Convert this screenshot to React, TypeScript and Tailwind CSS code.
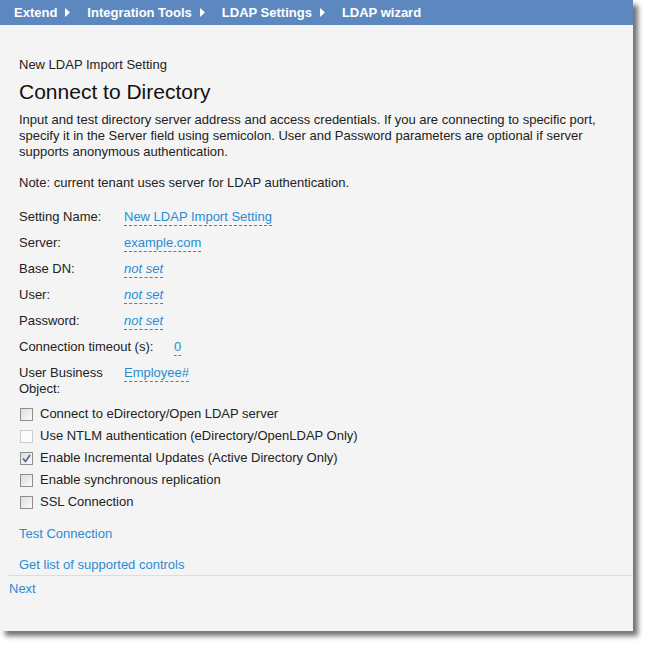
import React from "react";

const Tri = () => (
  <svg width="5" height="9" viewBox="0 0 5 9" className="ml-[8px] mr-[17px] inline-block">
    <path d="M0 0 L5 4.5 L0 9 Z" fill="#ffffff" />
  </svg>
);

const Box = ({ checked = false, disabled = false }: { checked?: boolean; disabled?: boolean }) => (
  <span
    className={
      "inline-flex h-[13px] w-[13px] items-center justify-center border " +
      (disabled ? "border-[#cdcdcd] bg-[#fbfbfb]" : "border-[#8e8e8e] bg-gradient-to-br from-[#dcdcdc] to-[#fbfbfb]")
    }
  >
    {checked && (
      <svg width="9" height="9" viewBox="0 0 9 9">
        <path d="M1 4.5 L3.5 7.5 L8 1" stroke="#4a5fa8" strokeWidth="1.6" fill="none" />
      </svg>
    )}
  </span>
);

const Row = ({ label, value, italic = false, wide = false }: { label: React.ReactNode; value: string; italic?: boolean; wide?: boolean }) => (
  <div className="flex h-[26px] items-start">
    <div className={wide ? "w-[155px]" : "w-[105px]"}>{label}</div>
    <span className={"border-b border-dashed border-[#2b8bd2] leading-[16px] text-[#2b8bd2] " + (italic ? "italic" : "")}>{value}</span>
  </div>
);

export default function App() {
  return (
    <div className="min-h-[646px] w-[648px] bg-white" style={{ fontFamily: '"Liberation Sans", Arial, sans-serif' }}>
      <div className="relative h-[631px] w-[633px] bg-[#f4f4f4] text-[13px] leading-[16px] text-[#222] shadow-[5px_5px_5px_rgba(0,0,0,0.55)]">
        <div className="flex h-[25px] items-center bg-[#5d88bf] pl-[14px] text-[13px] font-bold text-white">
          <span>Extend</span>
          <Tri />
          <span>Integration Tools</span>
          <Tri />
          <span>LDAP Settings</span>
          <Tri />
          <span>LDAP wizard</span>
        </div>
        <div className="pl-[19px] pr-[20px]">
          <div className="mt-[32px]">New LDAP Import Setting</div>
          <div className="mt-[7px] text-[21px] leading-[24px] text-[#111]">Connect to Directory</div>
          <div className="mt-[8px] pr-[8px]">
            Input and test directory server address and access credentials. If you are connecting to specific port, specify it in the Server field using semicolon. User and Password parameters are optional if server supports anonymous authentication.
          </div>
          <div className="mt-[15px]">Note: current tenant uses server for LDAP authentication.</div>
          <div className="mt-[18px]">
            <Row label="Setting Name:" value="New LDAP Import Setting" />
            <Row label="Server:" value="example.com" />
            <Row label="Base DN:" value="not set" italic />
            <Row label="User:" value="not set" italic />
            <Row label="Password:" value="not set" italic />
            <Row label="Connection timeout (s):" value="0" wide />
            <div className="flex items-start">
              <div className="w-[105px]">User Business<br />Object:</div>
              <span className="border-b border-dashed border-[#2b8bd2] leading-[16px] text-[#2b8bd2]">Employee#</span>
            </div>
          </div>
          <div className="mt-[6px] flex flex-col">
            {[
              { t: "Connect to eDirectory/Open LDAP server" },
              { t: "Use NTLM authentication (eDirectory/OpenLDAP Only)", d: true },
              { t: "Enable Incremental Updates (Active Directory Only)", c: true },
              { t: "Enable synchronous replication" },
              { t: "SSL Connection" },
            ].map((x, i) => (
              <div key={i} className="flex h-[22px] items-center">
                <span className="ml-[1px] mr-[7px] flex"><Box checked={x.c} disabled={x.d} /></span>
                <span>{x.t}</span>
              </div>
            ))}
          </div>
          <div className="mt-[13px] text-[#2b8bd2]">Test Connection</div>
          <div className="mt-[15px] text-[#2b8bd2]">Get list of supported controls</div>
        </div>
        <div className="ml-[8px] mt-[2px] border-t border-[#dcdcdc] pl-[1px] pt-[5px] text-[#2b8bd2]">Next</div>
      </div>
    </div>
  );
}
